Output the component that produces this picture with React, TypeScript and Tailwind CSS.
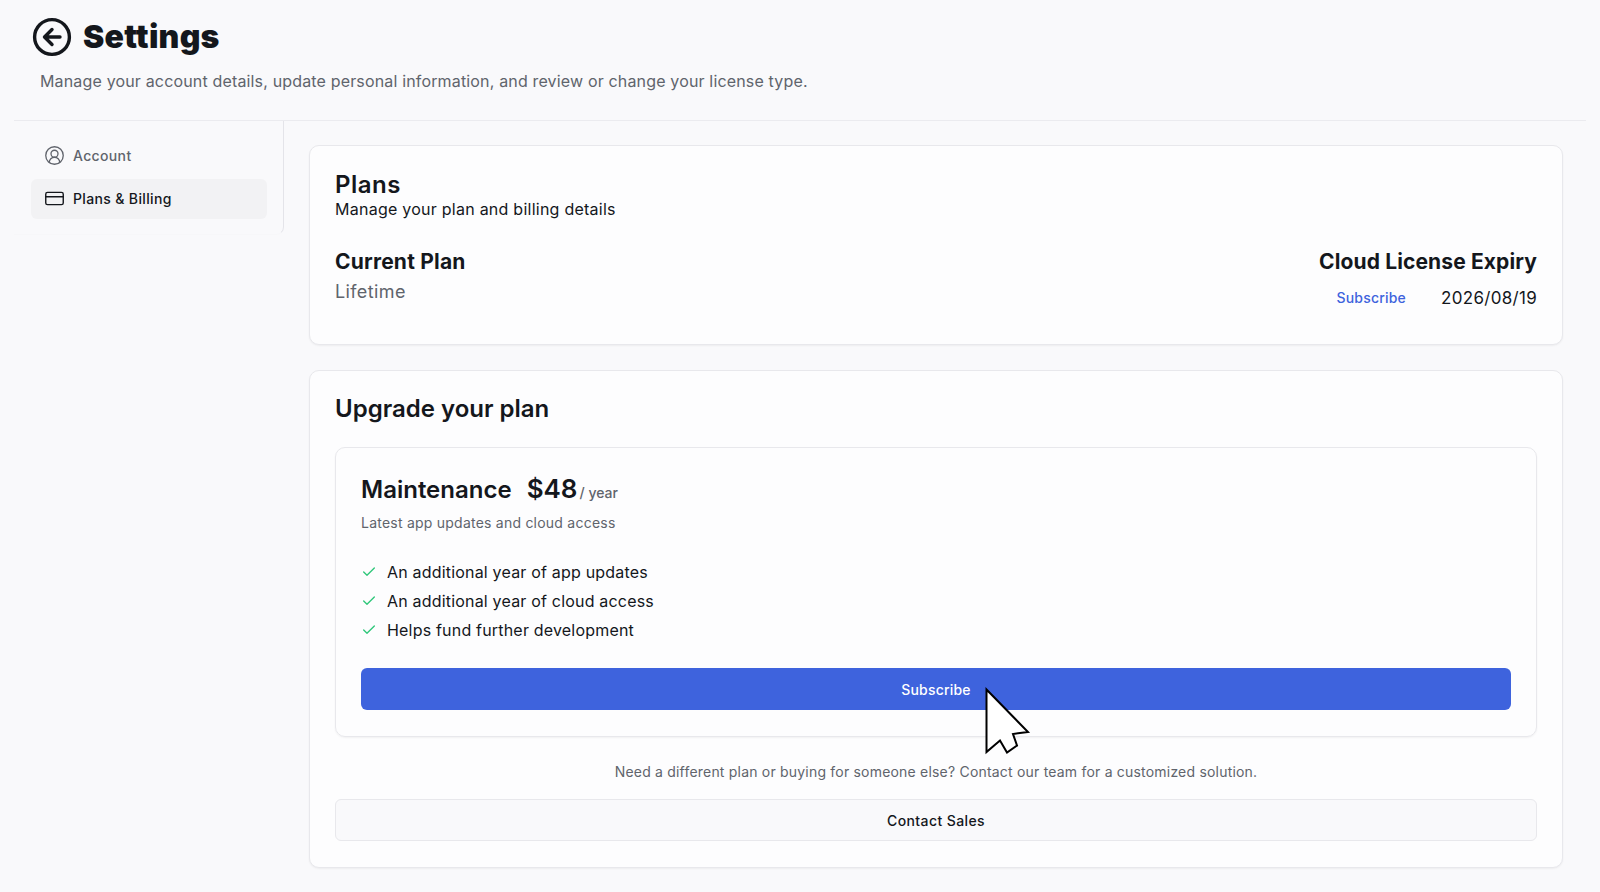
import React from 'react'
import { CircleUserRound, CreditCard, Check } from 'lucide-react'

const features = [
  'An additional year of app updates',
  'An additional year of cloud access',
  'Helps fund further development',
]

const BackIcon = () => (
  <svg width="40" height="40" viewBox="0 0 40 40" fill="none" stroke="#14171c" strokeLinecap="round" strokeLinejoin="round">
    <circle cx="20" cy="20" r="17.4" strokeWidth="3.4" />
    <path d="M28 20H13M20 12.5 12.5 20l7.5 7.5" strokeWidth="3.4" />
  </svg>
)

const Cursor = () => (
  <svg width="46" height="66" viewBox="0 0 46 66" className="absolute left-[624px] top-[20px] overflow-visible">
    <path d="M1.5 1.5V64L15 52.5 22 64.5l10-7-4-11.5 15-2Z" fill="#fff" stroke="#000" strokeWidth="2" strokeLinejoin="miter" />
  </svg>
)

export default function App() {
  return (
    <div className="h-[892px] w-[1600px] overflow-hidden bg-[#f9f9fb] font-['Inter',sans-serif] text-[#14171c]">
      {/* Header */}
      <div className="h-[120px] pl-[32px] pt-[17px]">
        <div className="flex items-center gap-[11px]">
          <BackIcon />
          <h1 className="text-[32px] leading-[40px] font-black tracking-[0.25px]">Settings</h1>
        </div>
        <p className="ml-[8px] mt-[12px] text-[16px] leading-[24px] tracking-[0.16px] text-[#60646c]">
          Manage your account details, update personal information, and review or change your license type.
        </p>
      </div>

      <div className="mx-[14px] flex border-t border-[#ebebef]">
        {/* Sidebar */}
        <div className="h-[114px] w-[270px] shrink-0 rounded-br-lg border-r border-b border-r-[#e4e4e9] border-b-[#f7f7f9] pl-[17px] pr-[16px] pt-[16px]">
          <div className="flex h-[38px] items-center gap-[8px] pb-[1px] pl-[13px] text-[14px] font-medium tracking-[0.35px] text-[#60646c]">
            <CircleUserRound size={21} strokeWidth={1.5} />
            Account
          </div>
          <div className="mt-[4px] flex h-[40px] items-center gap-[8px] rounded-md bg-[#f2f2f4] pb-[2px] pl-[13px] text-[14px] font-medium tracking-[0.35px] text-[#14171c]">
            <CreditCard size={21} strokeWidth={1.6} />
            Plans & Billing
          </div>
        </div>

        {/* Main */}
        <div className="ml-[25px] flex w-[1254px] flex-col gap-[25px] pt-[24px]">
          <section className="h-[200px] rounded-[10px] border border-[#e8e8ec] bg-[#fdfdfe] px-[25px] pt-[25px] shadow-[0_1px_2px_rgba(0,0,0,0.05)]">
            <h2 className="text-[24px] leading-[28px] font-semibold tracking-[0.5px]">Plans</h2>
            <p className="text-[16px] leading-[20px] font-normal tracking-[0.25px]">Manage your plan and billing details</p>
            <div className="mt-[29px] flex justify-between">
              <div>
                <h3 className="text-[21px] leading-[28px] font-bold tracking-[0.2px]">Current Plan</h3>
                <p className="mt-[2px] text-[18px] leading-[28px] tracking-[0.4px] text-[#60646c]">Lifetime</p>
              </div>
              <div className="flex flex-col items-end">
                <h3 className="text-[21px] leading-[28px] font-bold tracking-[0.12px]">Cloud License Expiry</h3>
                <div className="mt-[10px] flex items-center gap-[35px]">
                  <span className="text-[14px] leading-[24px] font-medium tracking-[0.2px] text-[#3e63dd]">Subscribe</span>
                  <span className="text-[17px] leading-[24px] tracking-[0.3px]">2026/08/19</span>
                </div>
              </div>
            </div>
          </section>

          <section className="h-[498px] rounded-[10px] border border-[#e8e8ec] bg-[#fdfdfe] px-[25px] pt-[22px] shadow-[0_1px_2px_rgba(0,0,0,0.05)]">
            <h2 className="text-[24px] leading-[32px] font-semibold">Upgrade your plan</h2>

            <div className="mt-[22px] h-[290px] rounded-[10px] border border-[#e8e8ec] px-[25px] pt-[25px] shadow-[0_1px_2px_rgba(0,0,0,0.05)]">
              <div className="flex h-[32px] items-baseline">
                <span className="text-[24px] leading-[32px] font-semibold">Maintenance</span>
                <span className="ml-[15px] text-[26px] leading-[32px] font-semibold">$48</span>
                <span className="ml-[2px] text-[14px] font-medium text-[#60646c]">/ year</span>
              </div>
              <p className="mt-[8px] text-[14px] leading-[20px] tracking-[0.23px] text-[#60646c]">Latest app updates and cloud access</p>
              <ul className="mt-[27px] flex flex-col gap-[5px]">
                {features.map(f => (
                  <li key={f} className="flex h-[24px] items-center gap-[10px] text-[16px] leading-[24px] tracking-[0.19px]">
                    <Check size={16} strokeWidth={2} className="text-[#2fc77a]" />
                    {f}
                  </li>
                ))}
              </ul>
              <div className="relative mt-[26px]">
                <button className="flex h-[42px] w-full items-center justify-center rounded-md bg-[#3e63dd] text-[14px] font-medium tracking-[0.2px] text-white">
                  Subscribe
                </button>
                <Cursor />
              </div>
            </div>

            <p className="mt-[25px] text-center text-[14px] leading-[20px] tracking-[0.2px] text-[#60646c]">
              Need a different plan or buying for someone else? Contact our team for a customized solution.
            </p>
            <button className="mt-[17px] flex h-[42px] w-full items-center justify-center rounded-md border border-[#e8e8ec] bg-[#f9f9fb] text-[14px] font-medium tracking-[0.4px]">
              Contact Sales
            </button>
          </section>
        </div>
      </div>
    </div>
  )
}
